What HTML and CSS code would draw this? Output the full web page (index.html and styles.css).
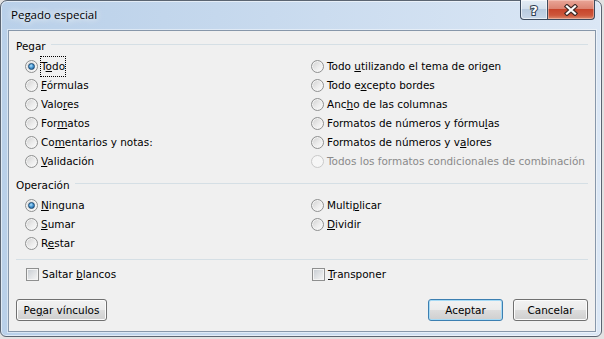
FILE: index.html
```html
<!DOCTYPE html>
<html lang="es">
<head>
  <meta charset="UTF-8">
  <title>Pegado especial</title>
  <link rel="stylesheet" href="styles.css">
</head>
<body>
  <div class="window">
    <div class="titlebar">
      <span class="title">Pegado especial</span>
      <div class="caps">
        <div class="cap help">
          <svg width="12" height="14" viewBox="0 0 12 14"><text x="6" y="12" text-anchor="middle" font-family="DejaVu Sans" font-weight="bold" font-size="13" fill="#fff" stroke="#2f3d50" stroke-width="2" paint-order="stroke">?</text></svg>
        </div>
        <div class="cap close">
          <svg width="14" height="12" viewBox="0 0 14 12">
            <path d="M3 2.5 L11 9.5 M11 2.5 L3 9.5" stroke="#402a26" stroke-width="4.4" stroke-linecap="square" fill="none"/>
            <path d="M3 2.5 L11 9.5 M11 2.5 L3 9.5" stroke="#fff" stroke-width="2.2" stroke-linecap="square" fill="none"/>
          </svg>
        </div>
      </div>
    </div>

    <div class="client">
      <div class="group-head">Pegar</div>
      <div class="options">
        <div class="opt"><span class="radio checked"></span><span class="focus">T<u>o</u>do</span></div>
        <div class="opt"><span class="radio"></span><span><u>F</u>órmulas</span></div>
        <div class="opt"><span class="radio"></span><span>Valo<u>r</u>es</span></div>
        <div class="opt"><span class="radio"></span><span>For<u>m</u>atos</span></div>
        <div class="opt"><span class="radio"></span><span>Co<u>m</u>entarios y notas:</span></div>
        <div class="opt"><span class="radio"></span><span><u>V</u>alidación</span></div>
        <div class="opt"><span class="radio"></span><span>Todo <u>u</u>tilizando el tema de origen</span></div>
        <div class="opt"><span class="radio"></span><span>Todo e<u>x</u>cepto bordes</span></div>
        <div class="opt"><span class="radio"></span><span>Anc<u>h</u>o de las columnas</span></div>
        <div class="opt"><span class="radio"></span><span>Formatos de números y fórmu<u>l</u>as</span></div>
        <div class="opt"><span class="radio"></span><span>Formatos de números y v<u>a</u>lores</span></div>
        <div class="opt disabled"><span class="radio"></span><span>Todos los formatos condicionales de combinación</span></div>
      </div>

      <div class="group-head second">Operación</div>
      <div class="options short">
        <div class="opt"><span class="radio checked"></span><span><u>N</u>inguna</span></div>
        <div class="opt"><span class="radio"></span><span><u>S</u>umar</span></div>
        <div class="opt"><span class="radio"></span><span>R<u>e</u>star</span></div>
        <div class="opt"><span class="radio"></span><span>Multi<u>p</u>licar</span></div>
        <div class="opt"><span class="radio"></span><span><u>D</u>ividir</span></div>
      </div>

      <div class="sep"></div>

      <div class="checks">
        <div class="opt"><span class="box"></span><span>Saltar <u>b</u>lancos</span></div>
        <div class="opt"><span class="box"></span><span><u>T</u>ransponer</span></div>
      </div>

      <div class="actions">
        <button class="btn wide">Pe<u>g</u>ar vínculos</button>
        <button class="btn default">Aceptar</button>
        <button class="btn">Cancelar</button>
      </div>
    </div>
  </div>
</body>
</html>
```

FILE: styles.css
```css
body {
  margin: 0;
  background: #e2e2e2;
  font-family: "DejaVu Sans", Tahoma, sans-serif;
  font-size: 10.45px;
  color: #000;
}
.window {
  width: 602px;
  height: 337px;
  box-sizing: border-box;
  border: 1px solid #5b6572;
  border-radius: 7px 7px 6px 6px;
  background: linear-gradient(to right, #b9d0e9 0%, #c8daee 45%, #dbe7f5 100%);
  box-shadow: inset 0 0 0 1px rgba(255, 255, 255, 0.55);
  display: flex;
  flex-direction: column;
  padding: 0 5px 4px 7px;
}
.titlebar {
  height: 29px;
  display: flex;
}
.title {
  font-family: "Open Sans", sans-serif;
  font-size: 11.5px;
  line-height: 16px;
  padding-top: 6px;
  margin-left: 3px;
  text-shadow: 0 0 6px #fff, 0 0 10px rgba(255, 255, 255, 0.8);
}
.caps {
  margin-left: auto;
  margin-right: 1px;
  margin-top: -1px;
  display: flex;
  height: 20px;
}
.cap {
  box-sizing: border-box;
  height: 20px;
  border: 1px solid #3d4b5e;
  border-top: 0;
  display: flex;
  align-items: center;
  justify-content: center;
}
.help {
  width: 28px;
  border-radius: 0 0 0 4px;
  background: linear-gradient(#e4ecf5 0%, #d3dfec 45%, #b8cadf 50%, #c8d7e9 100%);
  box-shadow: inset 0 0 0 1px rgba(255, 255, 255, 0.6);
}
.close {
  width: 47px;
  border-left: 0;
  border-radius: 0 0 4px 0;
  background: linear-gradient(#e9a698 0%, #dc8472 45%, #c7452c 50%, #cd563b 80%, #db8a6d 100%);
  box-shadow: inset 0 0 0 1px rgba(255, 220, 210, 0.45);
}
.client {
  flex: 1;
  display: flex;
  flex-direction: column;
  border: 1px solid #8797aa;
  background: #f0f0f0;
  box-shadow: 0 0 0 1px rgba(255, 255, 255, 0.45);
  padding: 8px 7px 0;
}
.group-head {
  display: flex;
  line-height: 14px;
}
.group-head::after {
  content: "";
  flex: 1;
  height: 1px;
  margin: 5px 0 0 5px;
  background: #d5dfe5;
}
.group-head.second {
  margin-top: 7px;
}
.options {
  display: grid;
  grid-template-columns: 286px 1fr;
  grid-template-rows: repeat(6, 19px);
  grid-auto-flow: column;
  padding-left: 9px;
  margin-top: 4px;
}
.options.short {
  grid-template-rows: repeat(3, 19px);
}
.opt {
  display: flex;
  align-items: center;
  line-height: 19px;
  white-space: nowrap;
}
.opt.disabled {
  color: #8a8a8a;
}
.focus {
  outline: 1px dotted #000;
}
.radio {
  flex: none;
  position: relative;
  width: 13px;
  height: 13px;
  box-sizing: border-box;
  margin-right: 3px;
  border-radius: 50%;
  border: 1px solid #8f9090;
  background: linear-gradient(135deg, #cfcfcf 0%, #ececec 55%, #fdfdfd 100%);
  box-shadow: inset 0 0 0 1px #f4f4f4;
}
.radio.checked::after {
  content: "";
  position: absolute;
  left: 2px;
  top: 2px;
  width: 7px;
  height: 7px;
  box-sizing: border-box;
  border-radius: 50%;
  border: 1px solid #1b4a74;
  background: radial-gradient(circle at 40% 35%, #b4e2fb 0%, #4a9ad6 45%, #1a5288 100%);
}
.disabled .radio {
  border-color: #c9c9c9;
  background: #f6f6f6;
  box-shadow: none;
}
.sep {
  height: 1px;
  margin-top: 6px;
  background: #d5dfe5;
}
.checks {
  display: grid;
  grid-template-columns: 286px 1fr;
  padding-left: 10px;
  margin-top: 5px;
}
.box {
  flex: none;
  width: 13px;
  height: 13px;
  box-sizing: border-box;
  margin-right: 3px;
  border: 1px solid #8e8f8f;
  background: linear-gradient(135deg, #c6cbd1 0%, #e4e6e8 60%, #f6f6f6 100%);
  box-shadow: inset 0 0 0 1px #f4f4f4;
}
.actions {
  display: flex;
  gap: 10px;
  margin-top: 15px;
}
.btn {
  box-sizing: border-box;
  width: 75px;
  height: 22px;
  padding: 0;
  font: inherit;
  line-height: 20px;
  color: #000;
  border: 1px solid #707070;
  border-radius: 3px;
  background: linear-gradient(#f2f2f2 0%, #ebebeb 50%, #dddddd 50%, #cfcfcf 100%);
  box-shadow: inset 0 0 0 1px #fcfcfc;
}
.btn.wide {
  width: 91px;
  margin-right: auto;
}
.btn.default {
  border-color: #3c7fb1;
  box-shadow: inset 0 0 0 1px #a6daf5;
}
```
